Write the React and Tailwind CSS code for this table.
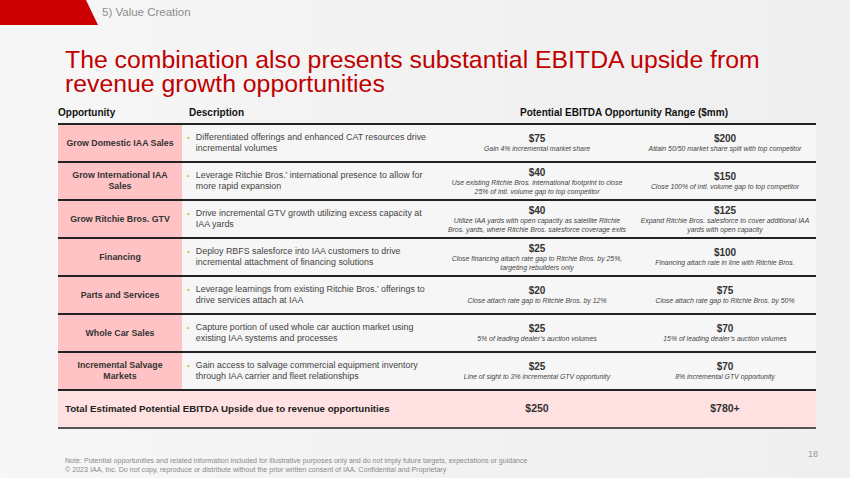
import React from "react";

const rows = [
  {
    name: "Grow Domestic IAA Sales",
    desc: "Differentiated offerings and enhanced CAT resources drive incremental volumes",
    low: "$75",
    lowNote: "Gain 4% incremental market share",
    high: "$200",
    highNote: "Attain 50/50 market share split with top competitor",
  },
  {
    name: "Grow International IAA Sales",
    desc: "Leverage Ritchie Bros.\u2019 international presence to allow for more rapid expansion",
    low: "$40",
    lowNote: "Use existing Ritchie Bros. international footprint to close 25% of intl. volume gap to top competitor",
    high: "$150",
    highNote: "Close 100% of intl. volume gap to top competitor",
  },
  {
    name: "Grow Ritchie Bros. GTV",
    desc: "Drive incremental GTV growth utilizing excess capacity at IAA yards",
    low: "$40",
    lowNote: "Utilize IAA yards with open capacity as satellite Ritchie Bros. yards, where Ritchie Bros. salesforce coverage exits",
    high: "$125",
    highNote: "Expand Ritchie Bros. salesforce to cover additional IAA yards with open capacity",
  },
  {
    name: "Financing",
    desc: "Deploy RBFS salesforce into IAA customers to drive incremental attachment of financing solutions",
    low: "$25",
    lowNote: "Close financing attach rate gap to Ritchie Bros. by 25%, targeting rebuilders only",
    high: "$100",
    highNote: "Financing attach rate in line with Ritchie Bros.",
  },
  {
    name: "Parts and Services",
    desc: "Leverage learnings from existing Ritchie Bros.\u2019 offerings to drive services attach at IAA",
    low: "$20",
    lowNote: "Close attach rate gap to Ritchie Bros. by 12%",
    high: "$75",
    highNote: "Close attach rate gap to Ritchie Bros. by 50%",
  },
  {
    name: "Whole Car Sales",
    desc: "Capture portion of used whole car auction market using existing IAA systems and processes",
    low: "$25",
    lowNote: "5% of leading dealer\u2019s auction volumes",
    high: "$70",
    highNote: "15% of leading dealer\u2019s auction volumes",
  },
  {
    name: "Incremental Salvage Markets",
    desc: "Gain access to salvage commercial equipment inventory through IAA carrier and fleet relationships",
    low: "$25",
    lowNote: "Line of sight to 3% incremental GTV opportunity",
    high: "$70",
    highNote: "8% incremental GTV opportunity",
  },
];

const ValueCell = ({ value, note }) => (
  <div className="flex flex-col items-center justify-center text-center px-[5px]">
    <div className="text-[10px] leading-[11px] font-bold text-[#333]">{value}</div>
    <div className="text-[6.9px] leading-[9px] italic text-[#444]">{note}</div>
  </div>
);

const App = () => {
  return (
    <div className="relative w-[850px] h-[478px] overflow-hidden bg-gradient-to-r from-[#f7f7f7] via-[#f2f2f2] to-[#efefef] font-['Liberation_Sans',Arial,sans-serif]">
      {/* section tab */}
      <div className="flex items-center h-[25px]">
        <div className="w-[98px] h-[25px] bg-[#cc0000] [clip-path:polygon(0_0,86px_0,98px_25px,0_25px)]"></div>
        <span className="ml-[4px] text-[11.5px] text-[#8c8c8c]">5) Value Creation</span>
      </div>

      <h1 className="mt-[23px] pl-[65px] pr-[30px] text-[24.8px] leading-[23.5px] text-[#c00000]">
        The combination also presents substantial EBITDA upside from revenue growth opportunities
      </h1>

      <div className="ml-[58px] w-[758px] mt-[11px]">
        {/* header */}
        <div className="grid grid-cols-[124px_258px_376px] h-[19px] border-b-2 border-[#222] text-[10px] leading-[14px] font-bold text-[#111]">
          <div>Opportunity</div>
          <div className="pl-[7px]">Description</div>
          <div className="text-center pr-[8px]">Potential EBITDA Opportunity Range ($mm)</div>
        </div>

        {rows.map((r) => (
          <div
            key={r.name}
            className="grid grid-cols-[124px_258px_194px_182px] h-[38px] border-b-2 border-[#222] bg-[#f6f6f6]"
          >
            <div className="bg-[#ffc3c5] flex items-center justify-center text-center px-[4px] text-[8.8px] leading-[11px] font-bold text-[#333]">
              {r.name}
            </div>
            <div className="flex items-center pl-[5px] pr-[6px]">
              <div className="flex items-start gap-[6px] text-[8.9px] leading-[11px] text-[#444]">
                <span className="text-[#d8bd55] text-[8px] leading-[11px]">•</span>
                <span>{r.desc}</span>
              </div>
            </div>
            <ValueCell value={r.low} note={r.lowNote} />
            <ValueCell value={r.high} note={r.highNote} />
          </div>
        ))}

        {/* total */}
        <div className="grid grid-cols-[382px_194px_182px] h-[38px] border-b-2 border-[#555] bg-[#ffe1e1] items-center">
          <div className="pl-[7px] text-[9.7px] font-bold text-[#222]">
            Total Estimated Potential EBITDA Upside due to revenue opportunities
          </div>
          <div className="text-center text-[10.5px] font-bold text-[#333]">$250</div>
          <div className="text-center text-[10.5px] font-bold text-[#333]">$780+</div>
        </div>
      </div>

      {/* footer */}
      <div className="flex justify-between mt-[20px] pl-[65px] pr-[32px]">
        <div className="pt-[8px] text-[7.1px] leading-[9px] text-[#8a8a8a]">
          <div>
            Note: Potential opportunities and related information included for illustrative purposes only and do not imply future targets, expectations or guidance
          </div>
          <div>
            © 2023 IAA, Inc. Do not copy, reproduce or distribute without the prior written consent of IAA. Confidential and Proprietary
          </div>
        </div>
        <div className="text-[9px] leading-[10px] text-[#999]">18</div>
      </div>
    </div>
  );
};

export default App;
